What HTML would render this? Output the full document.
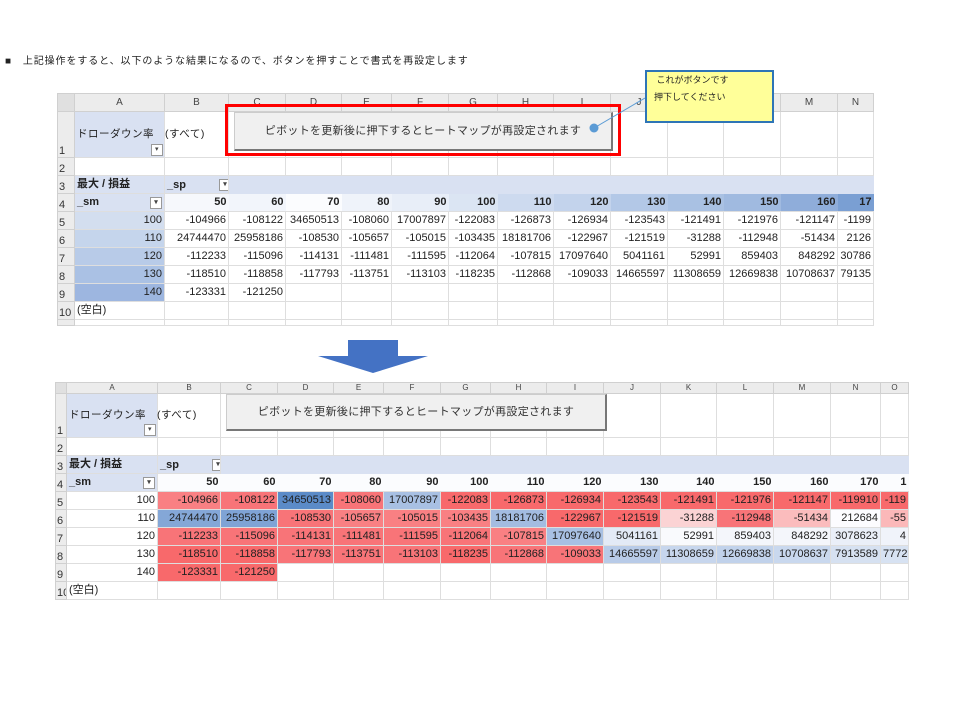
<!DOCTYPE html>
<html><head><meta charset="utf-8">
<style>
body{margin:0;width:960px;height:720px;background:#fff;position:relative;overflow:hidden;font-family:"Liberation Sans","Noto Sans CJK JP",sans-serif;color:#222}
.abs{position:absolute}
table{border-collapse:collapse;table-layout:fixed;position:absolute}
td{border:1px solid #dedede;padding:0 2px;font-size:11px;text-align:right;white-space:nowrap;overflow:hidden;line-height:1}
tr.h td{background:#ececec;color:#444;text-align:center;font-size:10px;border-color:#d0d0d0}
td.rh{background:#ececec;text-align:left;padding-left:1px;font-size:11px;color:#333;vertical-align:bottom;border-color:#d0d0d0}
.b{font-weight:bold}
.l{text-align:left}
.p{background:#d9e1f2}
.dd{display:inline-block;width:10px;height:10px;border:1px solid #999;background:#fff;font-size:7px;text-align:center;line-height:10px;color:#444;vertical-align:middle}
.btn{position:absolute;background:#f0f0f0;border:1px solid #ccc;border-right:2px solid #777;border-bottom:2px solid #777;font-size:11px;color:#333;text-align:center;font-family:"Liberation Sans","Noto Sans CJK JP",sans-serif;letter-spacing:0.3px}
.ov{overflow:visible;vertical-align:middle;position:relative;font-size:10.5px;letter-spacing:0.5px}
.R1{background:#f8696b}.R2{background:#f87478}.R3{background:#f98083}
</style></head><body>
<div class="abs" style="left:5px;top:52px;font-size:10px;letter-spacing:0.9px">■　上記操作をすると、以下のような結果になるので、ボタンを押すことで書式を再設定します</div>

<!-- TOP SHEET -->
<table style="left:57px;top:93px;width:816px">
<colgroup><col style="width:17px"><col style="width:90px"><col style="width:64px"><col style="width:57px"><col style="width:56px"><col style="width:50px"><col style="width:57px"><col style="width:49px"><col style="width:56px"><col style="width:57px"><col style="width:57px"><col style="width:56px"><col style="width:57px"><col style="width:57px"><col style="width:36px"></colgroup>
<tr class="h" style="height:18px"><td style="background:#e0e0e0"></td><td>A</td><td>B</td><td>C</td><td>D</td><td>E</td><td>F</td><td>G</td><td>H</td><td>I</td><td>J</td><td>K</td><td>L</td><td>M</td><td>N</td></tr>
<tr style="height:46px"><td class="rh">1</td><td class="p l ov">ドローダウン率　(すべて)<span class="dd" style="position:absolute;right:1px;bottom:1px">▾</span></td><td></td><td></td><td></td><td></td><td></td><td></td><td></td><td></td><td></td><td></td><td></td><td></td><td></td></tr>
<tr style="height:18px"><td class="rh">2</td><td></td><td></td><td></td><td></td><td></td><td></td><td></td><td></td><td></td><td></td><td></td><td></td><td></td><td></td></tr>
<tr style="height:18px" class="p"><td class="rh">3</td><td class="b l p">最大 / 損益</td><td class="b l p">_sp <span class="dd" style="margin-left:30px">▾</span></td><td class="p" style="border:none"></td><td class="p" style="border:none"></td><td class="p" style="border:none"></td><td class="p" style="border:none"></td><td class="p" style="border:none"></td><td class="p" style="border:none"></td><td class="p" style="border:none"></td><td class="p" style="border:none"></td><td class="p" style="border:none"></td><td class="p" style="border:none"></td><td class="p" style="border:none"></td><td class="p" style="border:none"></td></tr>
<tr style="height:18px" class="b"><td class="rh" style="font-weight:normal">4</td><td class="l p">_sm<span class="dd" style="float:right">▾</span></td><td style="background:#f6f8fc;border:none">50</td><td style="background:#f2f5fb;border:none">60</td><td style="background:#fbfcfe;border:none">70</td><td style="background:#eff3fa;border:none">80</td><td style="background:#e8eef8;border:none">90</td><td style="background:#dbe5f3;border:none">100</td><td style="background:#cddaef;border:none">110</td><td style="background:#c3d3ec;border:none">120</td><td style="background:#b3c8e7;border:none">130</td><td style="background:#a9c1e3;border:none">140</td><td style="background:#a0bae0;border:none">150</td><td style="background:#8fadda;border:none">160</td><td style="background:#7a9fd3;border:none">17</td></tr>
<tr style="height:18px"><td class="rh">5</td><td style="background:#d3deef">100</td><td>-104966</td><td>-108122</td><td>34650513</td><td>-108060</td><td>17007897</td><td>-122083</td><td>-126873</td><td>-126934</td><td>-123543</td><td>-121491</td><td>-121976</td><td>-121147</td><td>-1199</td></tr>
<tr style="height:18px"><td class="rh">6</td><td style="background:#c5d5ec">110</td><td>24744470</td><td>25958186</td><td>-108530</td><td>-105657</td><td>-105015</td><td>-103435</td><td>18181706</td><td>-122967</td><td>-121519</td><td>-31288</td><td>-112948</td><td>-51434</td><td>2126</td></tr>
<tr style="height:18px"><td class="rh">7</td><td style="background:#b8cbe8">120</td><td>-112233</td><td>-115096</td><td>-114131</td><td>-111481</td><td>-111595</td><td>-112064</td><td>-107815</td><td>17097640</td><td>5041161</td><td>52991</td><td>859403</td><td>848292</td><td>30786</td></tr>
<tr style="height:18px"><td class="rh">8</td><td style="background:#aac1e4">130</td><td>-118510</td><td>-118858</td><td>-117793</td><td>-113751</td><td>-113103</td><td>-118235</td><td>-112868</td><td>-109033</td><td>14665597</td><td>11308659</td><td>12669838</td><td>10708637</td><td>79135</td></tr>
<tr style="height:18px"><td class="rh">9</td><td style="background:#9db6e0">140</td><td>-123331</td><td>-121250</td><td></td><td></td><td></td><td></td><td></td><td></td><td></td><td></td><td></td><td></td><td></td></tr>
<tr style="height:18px"><td class="rh">10</td><td class="l">(空白)</td><td></td><td></td><td></td><td></td><td></td><td></td><td></td><td></td><td></td><td></td><td></td><td></td><td></td></tr>
<tr style="height:6px"><td class="rh"></td><td></td><td></td><td></td><td></td><td></td><td></td><td></td><td></td><td></td><td></td><td></td><td></td><td></td><td></td></tr>
</table>
<div class="btn" style="left:234px;top:112px;width:376px;height:36px;line-height:36px">ピボットを更新後に押下するとヒートマップが再設定されます</div>
<div class="abs" style="left:225px;top:104px;width:390px;height:46px;border:3px solid #ff0000"></div>
<svg class="abs" style="left:585px;top:90px" width="70" height="50"><line x1="9" y1="38" x2="60" y2="8" stroke="#5b9bd5" stroke-width="1"/><circle cx="9" cy="38" r="4.5" fill="#5b9bd5"/></svg>
<div class="abs" style="left:645px;top:70px;width:129px;height:53px;background:#ffff99;border:2px solid #2e75b6;font-size:9px;line-height:17px;padding-left:7px;box-sizing:border-box">&nbsp;これがボタンです<br>押下してください</div>

<!-- ARROW -->
<svg class="abs" style="left:316px;top:338px" width="114" height="38"><polygon points="32,2 82,2 82,18 112,18 57,35 2,18 32,18" fill="#4472c4"/></svg>

<!-- BOTTOM SHEET -->
<table style="left:55px;top:382px;width:853px">
<colgroup><col style="width:11px"><col style="width:91px"><col style="width:63px"><col style="width:57px"><col style="width:56px"><col style="width:50px"><col style="width:57px"><col style="width:50px"><col style="width:56px"><col style="width:57px"><col style="width:57px"><col style="width:56px"><col style="width:57px"><col style="width:57px"><col style="width:50px"><col style="width:28px"></colgroup>
<tr class="h" style="height:11px;font-size:8px"><td style="background:#e0e0e0"></td><td style="font-size:8px">A</td><td style="font-size:8px">B</td><td style="font-size:8px">C</td><td style="font-size:8px">D</td><td style="font-size:8px">E</td><td style="font-size:8px">F</td><td style="font-size:8px">G</td><td style="font-size:8px">H</td><td style="font-size:8px">I</td><td style="font-size:8px">J</td><td style="font-size:8px">K</td><td style="font-size:8px">L</td><td style="font-size:8px">M</td><td style="font-size:8px">N</td><td style="font-size:8px">O</td></tr>
<tr style="height:44px"><td class="rh">1</td><td class="p l ov">ドローダウン率　(すべて)<span class="dd" style="position:absolute;right:1px;bottom:1px">▾</span></td><td></td><td></td><td></td><td></td><td></td><td></td><td></td><td></td><td></td><td></td><td></td><td></td><td></td><td></td></tr>
<tr style="height:18px"><td class="rh">2</td><td></td><td></td><td></td><td></td><td></td><td></td><td></td><td></td><td></td><td></td><td></td><td></td><td></td><td></td><td></td></tr>
<tr style="height:18px" class="p"><td class="rh">3</td><td class="b l p">最大 / 損益</td><td class="b l p">_sp <span class="dd" style="margin-left:30px">▾</span></td><td class="p" style="border:none"></td><td class="p" style="border:none"></td><td class="p" style="border:none"></td><td class="p" style="border:none"></td><td class="p" style="border:none"></td><td class="p" style="border:none"></td><td class="p" style="border:none"></td><td class="p" style="border:none"></td><td class="p" style="border:none"></td><td class="p" style="border:none"></td><td class="p" style="border:none"></td><td class="p" style="border:none"></td><td class="p" style="border:none"></td></tr>
<tr style="height:18px;background:#fbfcfe" class="b"><td class="rh" style="font-weight:normal">4</td><td class="l p">_sm<span class="dd" style="float:right">▾</span></td><td style="border:none">50</td><td style="border:none">60</td><td style="border:none">70</td><td style="border:none">80</td><td style="border:none">90</td><td style="border:none">100</td><td style="border:none">110</td><td style="border:none">120</td><td style="border:none">130</td><td style="border:none">140</td><td style="border:none">150</td><td style="border:none">160</td><td style="border:none">170</td><td style="border:none">1</td></tr>
<tr style="height:18px"><td class="rh">5</td><td>100</td><td class="R3">-104966</td><td class="R2">-108122</td><td style="background:#5b8bc8">34650513</td><td class="R2">-108060</td><td style="background:#a8c0e3">17007897</td><td class="R1">-122083</td><td class="R1">-126873</td><td class="R1">-126934</td><td class="R1">-123543</td><td class="R1">-121491</td><td class="R1">-121976</td><td class="R1">-121147</td><td class="R1">-119910</td><td class="R1">-119</td></tr>
<tr style="height:18px"><td class="rh">6</td><td>110</td><td style="background:#84a7d7">24744470</td><td style="background:#7fa3d5">25958186</td><td class="R2">-108530</td><td class="R3">-105657</td><td class="R3">-105015</td><td class="R3">-103435</td><td style="background:#a3bce1">18181706</td><td class="R1">-122967</td><td class="R1">-121519</td><td style="background:#fbd3d4">-31288</td><td class="R2">-112948</td><td style="background:#fbbcbd">-51434</td><td style="background:#fcfcff">212684</td><td style="background:#fbb8b9">-55</td></tr>
<tr style="height:18px"><td class="rh">7</td><td>120</td><td class="R2">-112233</td><td class="R2">-115096</td><td class="R2">-114131</td><td class="R2">-111481</td><td class="R2">-111595</td><td class="R2">-112064</td><td class="R3">-107815</td><td style="background:#a8c0e3">17097640</td><td style="background:#e3eaf6">5041161</td><td style="background:#f9fafd">52991</td><td style="background:#f4f6fb">859403</td><td style="background:#f4f6fb">848292</td><td style="background:#eaeff8">3078623</td><td style="background:#f0f3fa">4</td></tr>
<tr style="height:18px"><td class="rh">8</td><td>130</td><td class="R1">-118510</td><td class="R1">-118858</td><td class="R2">-117793</td><td class="R2">-113751</td><td class="R2">-113103</td><td class="R1">-118235</td><td class="R2">-112868</td><td class="R2">-109033</td><td style="background:#b8cbe8">14665597</td><td style="background:#c7d6ed">11308659</td><td style="background:#c1d2eb">12669838</td><td style="background:#c9d8ee">10708637</td><td style="background:#d6e1f1">7913589</td><td style="background:#d7e2f2">7772</td></tr>
<tr style="height:18px"><td class="rh">9</td><td>140</td><td class="R1">-123331</td><td class="R1">-121250</td><td></td><td></td><td></td><td></td><td></td><td></td><td></td><td></td><td></td><td></td><td></td><td></td></tr>
<tr style="height:18px"><td class="rh">10</td><td class="l">(空白)</td><td></td><td></td><td></td><td></td><td></td><td></td><td></td><td></td><td></td><td></td><td></td><td></td><td></td><td></td></tr>
</table>
<div class="btn" style="left:226px;top:394px;width:378px;height:34px;line-height:34px">ピボットを更新後に押下するとヒートマップが再設定されます</div>
</body></html>
